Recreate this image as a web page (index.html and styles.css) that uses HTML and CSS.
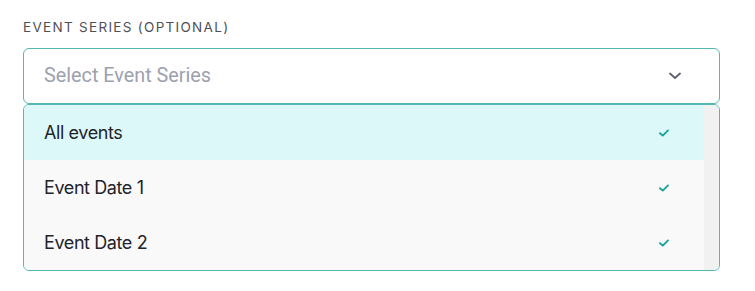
FILE: index.html
```html
<!DOCTYPE html>
<html>
<head>
<meta charset="utf-8">
<link rel="stylesheet" href="styles.css">
</head>
<body>
<div class="field">
  <div class="label">EVENT SERIES (OPTIONAL)</div>
  <div class="select">
    <span class="placeholder">Select Event Series</span>
    <svg class="chevron" width="12" height="8" viewBox="0 0 12 8"><path d="M1 1.5 L6 6 L11 1.5" fill="none" stroke="#5d6270" stroke-width="1.8" stroke-linecap="round" stroke-linejoin="round"/></svg>
  </div>
  <div class="menu">
    <div class="list">
      <div class="item active"><span>All events</span><svg class="check" width="10" height="8" viewBox="0 0 10 8"><path d="M1 4.2 L3.8 6.6 L9 1.4" fill="none" stroke="#17a59d" stroke-width="1.9" stroke-linecap="round" stroke-linejoin="round"/></svg></div>
      <div class="item"><span>Event Date 1</span><svg class="check" width="10" height="8" viewBox="0 0 10 8"><path d="M1 4.2 L3.8 6.6 L9 1.4" fill="none" stroke="#17a59d" stroke-width="1.9" stroke-linecap="round" stroke-linejoin="round"/></svg></div>
      <div class="item"><span>Event Date 2</span><svg class="check" width="10" height="8" viewBox="0 0 10 8"><path d="M1 4.2 L3.8 6.6 L9 1.4" fill="none" stroke="#17a59d" stroke-width="1.9" stroke-linecap="round" stroke-linejoin="round"/></svg></div>
    </div>
    <div class="scrollbar"></div>
  </div>
</div>
</body>
</html>
```
FILE: styles.css
```css
html, body { margin: 0; padding: 0; background: #fff; }
.field {
  padding: 19px 36px 0 23px;
  width: 697px;
}
.label {
  font-family: Inter, "Liberation Sans", sans-serif;
  font-size: 13.5px;
  letter-spacing: 1.3px;
  color: #4f4f55;
  line-height: 16px;
  margin-bottom: 13px;
}
.select {
  box-sizing: border-box;
  height: 56px;
  border: 1px solid #52b8b2;
  border-radius: 6px;
  display: flex;
  align-items: center;
  justify-content: space-between;
  padding: 0 38px 0 20px;
}
.placeholder {
  font-family: Roboto, "Liberation Sans", sans-serif;
  font-size: 19.8px;
  color: #9ca1ae;
  margin-top: -2px;
}
.chevron { display: block; }
.menu {
  box-sizing: border-box;
  height: 167px;
  border: 1px solid #52b8b2;
  border-radius: 6px;
  display: flex;
  overflow: hidden;
  background: #f9f9f9;
}
.list { flex: 1; }
.item {
  height: 55px;
  display: flex;
  align-items: center;
  justify-content: space-between;
  padding: 0 35px 0 20px;
  font-family: Inter, "Liberation Sans", sans-serif;
  font-size: 18px;
  letter-spacing: -0.4px;
  color: #23232a;
  background: #f9f9f9;
}
.item.active { background: #dcf8f8; }
.check { display: block; }
.scrollbar { width: 15px; background: #f1f1f1; }
```
